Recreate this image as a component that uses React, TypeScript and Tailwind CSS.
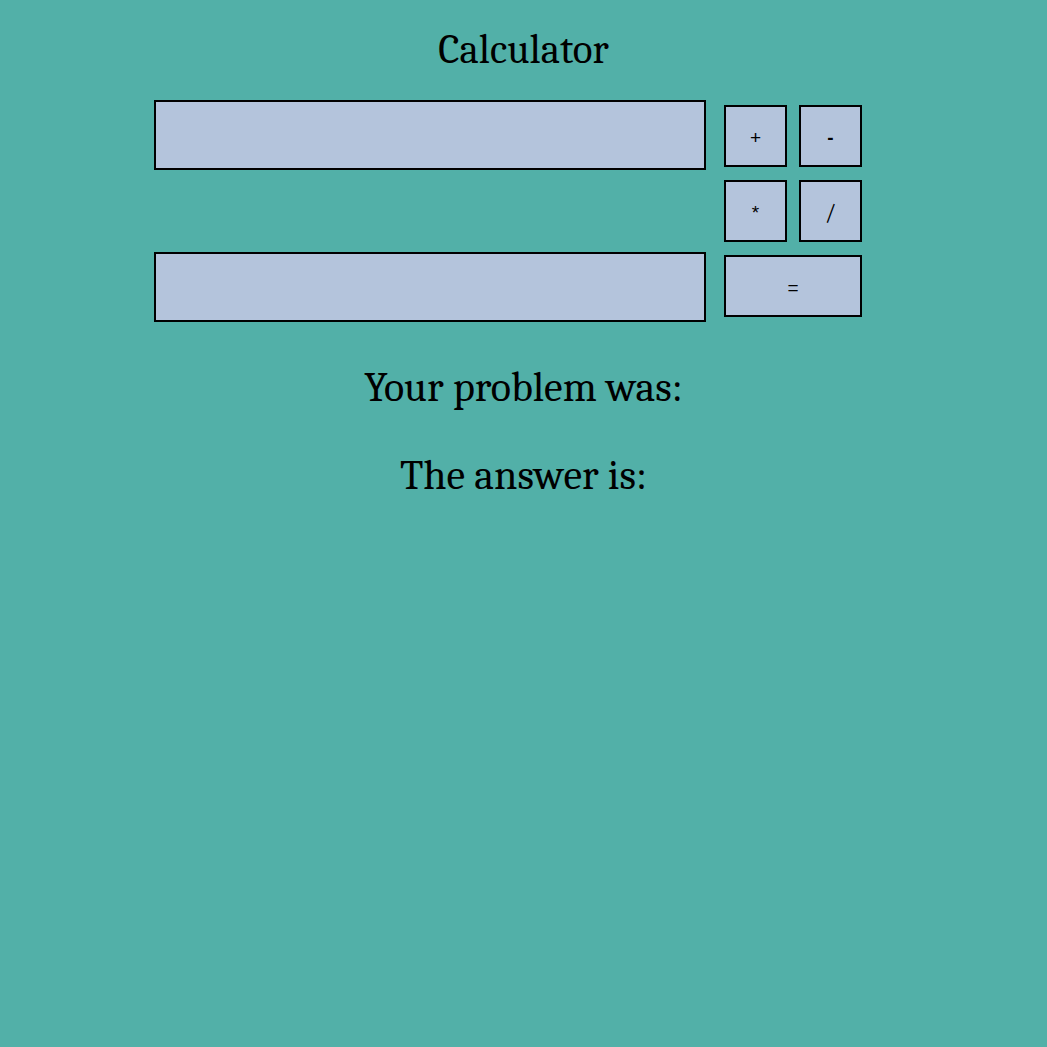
export default function App() {
  const serif = { fontFamily: '"Caladea", "Liberation Serif", serif' };
  const btn =
    "border-2 border-black bg-[#b4c4dc] text-black flex items-center justify-center pt-[3px]";
  const sans = { fontFamily: '"Liberation Sans", Arial, sans-serif', fontSize: "19px", lineHeight: "20px" };

  return (
    <div className="min-h-[1047px] w-full bg-[#52b0a8]" style={serif}>
      <h1 className="pt-[24px] text-center text-[41px] leading-[52px] text-black">Calculator</h1>

      <div className="mt-[24px] flex items-center pl-[154px]">
        <div className="flex flex-col gap-[82px]">
          <input className="h-[70px] w-[552px] border-2 border-black bg-[#b4c4dc] outline-none" />
          <input className="h-[70px] w-[552px] border-2 border-black bg-[#b4c4dc] outline-none" />
        </div>

        <div className="ml-[18px] grid grid-cols-[63px_63px] gap-x-[12px] gap-y-[13px]">
          <button className={`${btn} h-[62px]`} style={sans}>+</button>
          <button className={`${btn} h-[62px] font-bold`} style={sans}>-</button>
          <button className={`${btn} h-[62px]`} style={sans}>*</button>
          <button className={`${btn} h-[62px] text-[22px] leading-[24px]`}>/</button>
          <button className={`${btn} col-span-2 h-[62px]`} style={sans}>=</button>
        </div>
      </div>

      <p className="mt-[40px] text-center text-[42px] leading-[52px] text-black">Your problem was:</p>
      <p className="mt-[36px] text-center text-[42px] leading-[52px] text-black">The answer is:</p>
    </div>
  );
}
